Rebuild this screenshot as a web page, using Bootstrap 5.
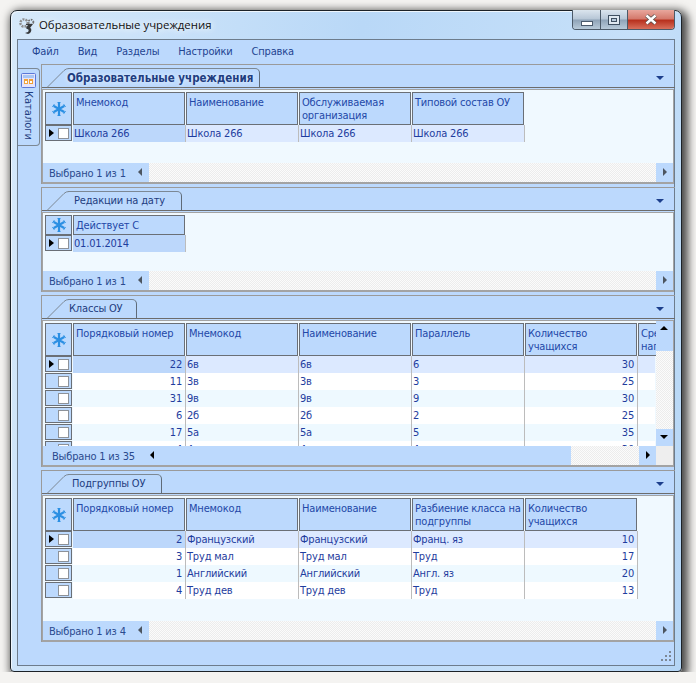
<!DOCTYPE html>
<html lang="ru">
<head>
    <meta charset="UTF-8">
    <title>Образовательные учреждения</title>
    <link rel="stylesheet" href="https://cdn.jsdelivr.net/npm/bootstrap@5.3.0/dist/css/bootstrap.min.css">
    <style>
        body { background: #f4f3f1; overflow: hidden; font-family: "DejaVu Sans Condensed", "Noto Sans", sans-serif; font-size: 11px; letter-spacing: -.18px; color: #1f3d9e; }
        .win { width: 672px; height: 662px; margin: 10px 0 0 10px; padding: 0 6px 6px 6px; border: 1px solid #1c2228; border-radius: 7px 7px 4px 4px;
            background: linear-gradient(100deg, #d6e9fa 0%, #b9d8f7 45%, #c6e0f9 80%, #b4d5f5 100%); box-shadow: 3px 3px 9px 3px rgba(0,0,0,.7), inset 1px 1px 0 #eef6fd; position: relative; }
        .titlebar { height: 28px; }
        .titleicon { margin: 2px 3px 0 1px; flex: none; }
        .title-text { font-family: "Open Sans", "Noto Sans", sans-serif; font-size: 11.4px; letter-spacing: 0; color: #111; text-shadow: 0 0 6px #fff, 0 0 8px #eaf4fd; }
        .capbtns { position: absolute; top: -1px; right: 6px; height: 20px; border: 1px solid #4c5a68; border-top: 0; border-radius: 0 0 4px 4px; overflow: hidden; }
        .capbtn { height: 19px; width: 28px; border-right: 1px solid #4c5a68; background: linear-gradient(#dbe5ee 0%, #b6c6d6 48%, #8fa3b7 52%, #b8cad9 100%); }
        .capmax { width: 27px; }
        .capclose { width: 46px; border-right: 0; background: linear-gradient(#e9a79d 0%, #d47a6d 45%, #b8321f 55%, #d8705c 100%); }
        .inner { height: 627px; border: 1px solid #6d7c8c; background: #bcd9fd; position: relative; }
        .menubar { height: 24px; padding: 1px 0 0 14px; gap: 19px; color: #1f4491; }
        .sidecol { width: 23px; flex: none; }
        .sidetab { width: 22px; height: 78px; margin-top: 4px; border: 1px solid #7c8894; border-radius: 0 4px 4px 0; border-left: 0; background: #bcd9fd; }
        .sideicon { margin: 4px 0 3px 3px; display: block; }
        .sidetext { writing-mode: vertical-rl; margin-left: 4px; line-height: 13px; color: #1f3d80; letter-spacing: 0; }
        .maincol { width: 634px; flex: none; }
        .oupanel { border-top: 1px solid #9a9a9a; border-left: 1px solid #9a9a9a; margin-bottom: 3px; }
        .panelhead { height: 23px; border-bottom: 1px solid #6c6c6c; padding-top: 3px; position: relative; }
        .tabslant { flex: none; margin-left: 5px; }
        .tabbody { height: 20px; border-top: 1px solid #7c8894; border-right: 1px solid #5f6b78; border-radius: 0 5px 0 0; line-height: 18px; color: #1f3d80; margin-left: -1px; }
        .tabbold { font-weight: 700; font-size: 11.5px; letter-spacing: 0; color: #1f3d80; text-shadow: 0 0 4px #eef7ff; }
        .tab1 { width: 192px; text-indent: -1px; }
        .tab2 { width: 114px; padding-left: 6px; }
        .tab3 { width: 69px; padding-left: 1px; }
        .tab4 { width: 94px; padding-left: 4px; }
        .panelarrow { position: absolute; right: 11px; top: 11px; width: 0; height: 0; border-left: 4px solid transparent; border-right: 4px solid transparent; border-top: 4px solid #1c3f8c; }
        .gridframe { margin: 1px 1px 0 0; border: 2px solid #a3a3a3; border-width: 1px 1px 2px 1px; background: #f0f9ff; }
        .gridarea { padding: 2px 0 0 2px; overflow: hidden; position: relative; }
        .h-a { height: 73px; }
        .h-b { height: 58px; }
        .h-c { height: 125px; }
        .gridrow { height: 17px; }
        .headrow { height: 33px; }
        .headrow.low { height: 20px; }
        .selcell { width: 27px; flex: none; margin-right: 1px; border: 1px solid #6a6f76; background: #bcd9fd; position: relative; }
        .gridrow .selcell { margin-bottom: 1px; }
        .ptr { position: absolute; left: 3px; top: 3px; width: 0; height: 0; border-top: 4.5px solid transparent; border-bottom: 4.5px solid transparent; border-left: 5px solid #000; }
        .chk { position: absolute; left: 12px; top: 2px; width: 11px; height: 11px; background: #fff; border: 1px solid #8d9299; }
        .hcell { width: 112px; flex: none; margin-right: 1px; border: 1px solid #6a6f76; background: #bcd9fd; padding: 3px 0 0 2px; line-height: 13px; overflow: hidden; color: #2348a8; }
        .dcell { width: 113px; flex: none; border-right: 1px solid #bcbcbc; padding: 0 2px 0 1px; line-height: 17px; white-space: nowrap; overflow: hidden; color: #1f3d9e; }
        .dcell.num { text-align: right; padding-right: 3px; }
        .rowsel .dcell { background: #dce9ff; }
        .rowsel .dcell.cur { background: #bcd7fb; }
        .rowodd .dcell { background: #fff; }
        .roweven .dcell { background: #eef9ff; }
        .dcell.lastc { border-right: 0; width: 17px; }
        .hcell.lastc { width: 40px; margin-right: 0; border-right: 0; }
        .gridfoot { height: 19px; }
        .footleft { width: 106px; background: #bcd9fd; padding-left: 6px; line-height: 21px; color: #2a4a8e; position: relative; }
        .footwide { width: 528px; padding-left: 9px; }
        .dither { background: repeating-conic-gradient(#ececec 0 25%, #fbfbfb 0 50%) 0 0 / 2px 2px; }
        .leftarr { position: absolute; top: 5px; width: 0; height: 0; border-top: 4px solid transparent; border-bottom: 4px solid transparent; border-right: 4px solid #4c5560; }
        .scrbtn { width: 17px; height: 19px; flex: none; background: #bcd9fd; position: relative; }
        .rightarr { position: absolute; left: 7px; top: 5px; width: 0; height: 0; border-top: 4px solid transparent; border-bottom: 4px solid transparent; border-left: 4px solid #4c5560; }
        .blackarr { border-left-color: #000; }
        .corner { width: 17px; background: #eee; }
        .vscroll { position: absolute; right: 0; top: 0; width: 17px; height: 125px; }
        .vtop { height: 30px; background: #bcd9fd; position: relative; }
        .vmid { height: 78px; }
        .vbot { height: 17px; background: #bcd9fd; position: relative; }
        .uparr { position: absolute; left: 4px; top: 5px; width: 0; height: 0; border-left: 4px solid transparent; border-right: 4px solid transparent; border-bottom: 4px solid #000; }
        .dnarr { position: absolute; left: 4px; top: 6px; width: 0; height: 0; border-left: 4px solid transparent; border-right: 4px solid transparent; border-top: 4px solid #000; }
        .grip { position: absolute; right: 2px; bottom: 2px; }
    </style>
</head>
<body>
<svg width="0" height="0" class="position-absolute">
    <symbol id="flake" viewBox="0 0 14 14">
        <path d="M7 1v12M1.8 4l10.4 6M12.2 4L1.8 10" stroke="#2b8fe3" stroke-width="2.2" fill="none"/>
        <path d="M5.5 .5h3M5.5 13.5h3M.5 5l1.8-2.8M13.5 9l-1.8 2.8M13.5 5l-1.8-2.8M.5 9l1.8 2.8" stroke="#2b8fe3" stroke-width="1" fill="none"/>
    </symbol>
</svg>
<div class="win">
    <div class="titlebar d-flex align-items-center">
        <svg class="titleicon" width="18" height="18" viewBox="0 0 18 18">
            <circle cx="6" cy="6" r="3.6" fill="none" stroke="#8d8d8d" stroke-width="2.4" stroke-dasharray="2 1"/>
            <circle cx="13" cy="5" r="2.4" fill="none" stroke="#6f6f6f" stroke-width="1.8" stroke-dasharray="1.5 1"/>
            <path d="M8 7h7l-3 4c2 0 2 5-2 6l-3-1 3-1c1-1 1-3-1-3l-1-1 2-3H8z" fill="#37393b"/>
        </svg>
        <span class="title-text">Образовательные учреждения</span>
    </div>
    <div class="capbtns d-flex">
        <div class="capbtn d-flex align-items-center justify-content-center">
            <svg width="12" height="5" class="mt-2"><rect x=".5" y=".5" width="11" height="4" fill="#fff" stroke="#4a5a6c"/></svg>
        </div>
        <div class="capbtn capmax d-flex align-items-center justify-content-center">
            <svg width="12" height="10"><rect x=".5" y=".5" width="11" height="9" fill="#dfe8f0" stroke="#3f4f60"/><rect x="3.5" y="3.5" width="5" height="3" fill="#b8c9d9" stroke="#3f4f60"/></svg>
        </div>
        <div class="capbtn capclose d-flex align-items-center justify-content-center">
            <svg width="12" height="11" viewBox="0 0 12 11"><path d="M1.5 1.5l9 8M10.5 1.5l-9 8" stroke="#55504e" stroke-width="4" fill="none"/><path d="M1.5 1.5l9 8M10.5 1.5l-9 8" stroke="#fff" stroke-width="2.4" fill="none"/></svg>
        </div>
    </div>

    <div class="inner">
        <div class="menubar d-flex align-items-center">
            <span>Файл</span><span>Вид</span><span>Разделы</span><span>Настройки</span><span>Справка</span>
        </div>
        <div class="d-flex">
            <div class="sidecol">
                <div class="sidetab">
                    <svg class="sideicon" width="15" height="15" viewBox="0 0 15 15">
                        <rect x=".5" y=".5" width="14" height="14" rx="1" fill="#e6e4fa" stroke="#5a78d8"/>
                        <rect x="2" y="2" width="11" height="3" fill="#a9c6f4"/>
                        <rect x="3" y="6" width="4" height="5" fill="#f2a53a"/>
                        <rect x="8" y="6" width="4" height="5" fill="#ef9f36"/>
                        <rect x="4" y="8" width="2" height="2" fill="#fff"/>
                        <rect x="9" y="8" width="2" height="2" fill="#fff"/>
                    </svg>
                    <div class="sidetext">Каталоги</div>
                </div>
            </div>
            <div class="maincol">

                <div class="oupanel">
                    <div class="panelhead d-flex">
                        <svg class="tabslant" width="22" height="20" viewBox="0 0 22 20"><path d="M0 19.5L17 2.5Q19 .5 22 .5" fill="none" stroke="#7c8894"/></svg>
                        <div class="tabbody tabbold tab1">Образовательные учреждения</div>
                        <div class="panelarrow"></div>
                    </div>
                    <div class="gridframe">
                        <div class="gridarea h-a">
                            <div class="headrow d-flex">
                                <div class="selcell d-flex align-items-center justify-content-center"><svg width="14" height="14"><use href="#flake"/></svg></div>
                                <div class="hcell">Мнемокод</div><div class="hcell">Наименование</div><div class="hcell">Обслуживаемая организация</div><div class="hcell">Типовой состав ОУ</div>
                            </div>
                            <div class="gridrow rowsel d-flex">
                                <div class="selcell"><span class="ptr"></span><span class="chk"></span></div>
                                <div class="dcell cur">Школа 266</div><div class="dcell">Школа 266</div><div class="dcell">Школа 266</div><div class="dcell">Школа 266</div>
                            </div>
                        </div>
                        <div class="gridfoot d-flex">
                            <div class="footleft">Выбрано 1 из 1<span class="leftarr" style="left:95px"></span></div>
                            <div class="dither flex-grow-1"></div>
                            <div class="scrbtn"><span class="rightarr"></span></div>
                        </div>
                    </div>
                </div>

                <div class="oupanel">
                    <div class="panelhead d-flex">
                        <svg class="tabslant" width="22" height="20" viewBox="0 0 22 20"><path d="M0 19.5L17 2.5Q19 .5 22 .5" fill="none" stroke="#7c8894"/></svg>
                        <div class="tabbody tab2">Редакции на дату</div>
                        <div class="panelarrow"></div>
                    </div>
                    <div class="gridframe">
                        <div class="gridarea h-b">
                            <div class="headrow low d-flex">
                                <div class="selcell d-flex align-items-center justify-content-center"><svg width="14" height="14"><use href="#flake"/></svg></div>
                                <div class="hcell">Действует С</div>
                            </div>
                            <div class="gridrow rowsel d-flex">
                                <div class="selcell"><span class="ptr"></span><span class="chk"></span></div>
                                <div class="dcell cur">01.01.2014</div>
                            </div>
                        </div>
                        <div class="gridfoot d-flex">
                            <div class="footleft">Выбрано 1 из 1<span class="leftarr" style="left:95px"></span></div>
                            <div class="dither flex-grow-1"></div>
                            <div class="scrbtn"><span class="rightarr"></span></div>
                        </div>
                    </div>
                </div>

                <div class="oupanel">
                    <div class="panelhead d-flex">
                        <svg class="tabslant" width="22" height="20" viewBox="0 0 22 20"><path d="M0 19.5L17 2.5Q19 .5 22 .5" fill="none" stroke="#7c8894"/></svg>
                        <div class="tabbody tab3">Классы ОУ</div>
                        <div class="panelarrow"></div>
                    </div>
                    <div class="gridframe">
                        <div class="gridarea h-c">
                            <div class="headrow d-flex">
                                <div class="selcell d-flex align-items-center justify-content-center"><svg width="14" height="14"><use href="#flake"/></svg></div>
                                <div class="hcell">Порядковый номер</div><div class="hcell">Мнемокод</div><div class="hcell">Наименование</div><div class="hcell">Параллель</div><div class="hcell">Количество учащихся</div><div class="hcell lastc">Средняя наполняемость</div>
                            </div>
                            <div class="gridrow rowsel d-flex">
                                <div class="selcell"><span class="ptr"></span><span class="chk"></span></div>
                                <div class="dcell num cur">22</div><div class="dcell">6в</div><div class="dcell">6в</div><div class="dcell">6</div><div class="dcell num">30</div><div class="dcell lastc"></div>
                            </div>
                            <div class="gridrow rowodd d-flex">
                                <div class="selcell"><span class="chk"></span></div>
                                <div class="dcell num">11</div><div class="dcell">3в</div><div class="dcell">3в</div><div class="dcell">3</div><div class="dcell num">25</div><div class="dcell lastc"></div>
                            </div>
                            <div class="gridrow roweven d-flex">
                                <div class="selcell"><span class="chk"></span></div>
                                <div class="dcell num">31</div><div class="dcell">9в</div><div class="dcell">9в</div><div class="dcell">9</div><div class="dcell num">30</div><div class="dcell lastc"></div>
                            </div>
                            <div class="gridrow rowodd d-flex">
                                <div class="selcell"><span class="chk"></span></div>
                                <div class="dcell num">6</div><div class="dcell">2б</div><div class="dcell">2б</div><div class="dcell">2</div><div class="dcell num">25</div><div class="dcell lastc"></div>
                            </div>
                            <div class="gridrow roweven d-flex">
                                <div class="selcell"><span class="chk"></span></div>
                                <div class="dcell num">17</div><div class="dcell">5а</div><div class="dcell">5а</div><div class="dcell">5</div><div class="dcell num">35</div><div class="dcell lastc"></div>
                            </div>
                            <div class="gridrow rowodd d-flex">
                                <div class="selcell"><span class="chk"></span></div>
                                <div class="dcell num">4</div><div class="dcell">4а</div><div class="dcell">4а</div><div class="dcell">4</div><div class="dcell num">30</div><div class="dcell lastc"></div>
                            </div>
                            <div class="vscroll">
                                <div class="vtop"><span class="uparr"></span></div>
                                <div class="vmid dither"></div>
                                <div class="vbot"><span class="dnarr"></span></div>
                            </div>
                        </div>
                        <div class="gridfoot d-flex">
                            <div class="footleft footwide">Выбрано 1 из 35<span class="leftarr" style="left:107px;border-right-color:#000"></span></div>
                            <div class="dither flex-grow-1"></div>
                            <div class="scrbtn"><span class="rightarr blackarr"></span></div>
                            <div class="corner"></div>
                        </div>
                    </div>
                </div>

                <div class="oupanel mb-0">
                    <div class="panelhead d-flex">
                        <svg class="tabslant" width="22" height="20" viewBox="0 0 22 20"><path d="M0 19.5L17 2.5Q19 .5 22 .5" fill="none" stroke="#7c8894"/></svg>
                        <div class="tabbody tab4">Подгруппы ОУ</div>
                        <div class="panelarrow"></div>
                    </div>
                    <div class="gridframe">
                        <div class="gridarea h-c">
                            <div class="headrow d-flex">
                                <div class="selcell d-flex align-items-center justify-content-center"><svg width="14" height="14"><use href="#flake"/></svg></div>
                                <div class="hcell">Порядковый номер</div><div class="hcell">Мнемокод</div><div class="hcell">Наименование</div><div class="hcell">Разбиение класса на подгруппы</div><div class="hcell">Количество учащихся</div>
                            </div>
                            <div class="gridrow rowsel d-flex">
                                <div class="selcell"><span class="ptr"></span><span class="chk"></span></div>
                                <div class="dcell num cur">2</div><div class="dcell">Французский</div><div class="dcell">Французский</div><div class="dcell">Франц. яз</div><div class="dcell num">10</div>
                            </div>
                            <div class="gridrow rowodd d-flex">
                                <div class="selcell"><span class="chk"></span></div>
                                <div class="dcell num">3</div><div class="dcell">Труд мал</div><div class="dcell">Труд мал</div><div class="dcell">Труд</div><div class="dcell num">17</div>
                            </div>
                            <div class="gridrow roweven d-flex">
                                <div class="selcell"><span class="chk"></span></div>
                                <div class="dcell num">1</div><div class="dcell">Английский</div><div class="dcell">Английский</div><div class="dcell">Англ. яз</div><div class="dcell num">20</div>
                            </div>
                            <div class="gridrow rowodd d-flex">
                                <div class="selcell"><span class="chk"></span></div>
                                <div class="dcell num">4</div><div class="dcell">Труд дев</div><div class="dcell">Труд дев</div><div class="dcell">Труд</div><div class="dcell num">13</div>
                            </div>
                        </div>
                        <div class="gridfoot d-flex">
                            <div class="footleft">Выбрано 1 из 4<span class="leftarr" style="left:95px"></span></div>
                            <div class="dither flex-grow-1"></div>
                            <div class="scrbtn"><span class="rightarr"></span></div>
                        </div>
                    </div>
                </div>

            </div>
        </div>
        <svg class="grip" width="12" height="12" viewBox="0 0 12 12" fill="#7d8894">
            <rect x="9" y="0" width="2" height="2"/><rect x="5" y="4" width="2" height="2"/><rect x="9" y="4" width="2" height="2"/>
            <rect x="1" y="8" width="2" height="2"/><rect x="5" y="8" width="2" height="2"/><rect x="9" y="8" width="2" height="2"/>
        </svg>
    </div>
</div>
<script src="https://cdn.jsdelivr.net/npm/bootstrap@5.3.0/dist/js/bootstrap.bundle.min.js"></script>
</body>
</html>
